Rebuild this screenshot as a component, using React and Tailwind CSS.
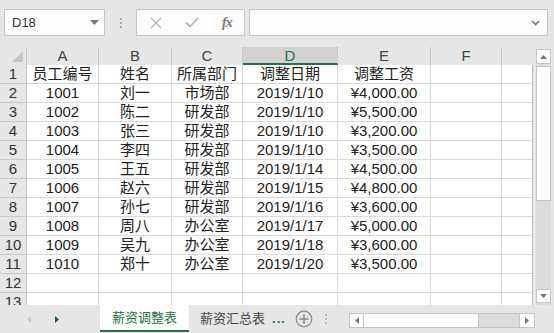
import React from 'react';

const cols = [
  { key: 'A', w: 72 },
  { key: 'B', w: 73 },
  { key: 'C', w: 71 },
  { key: 'D', w: 95 },
  { key: 'E', w: 93 },
  { key: 'F', w: 71 },
  { key: '', w: 30 },
];

const colW = ['w-[72px]', 'w-[73px]', 'w-[71px]', 'w-[95px]', 'w-[93px]', 'w-[71px]', 'w-[30px]'];

const rows = [
  ['员工编号', '姓名', '所属部门', '调整日期', '调整工资'],
  ['1001', '刘一', '市场部', '2019/1/10', '¥4,000.00'],
  ['1002', '陈二', '研发部', '2019/1/10', '¥5,500.00'],
  ['1003', '张三', '研发部', '2019/1/10', '¥3,200.00'],
  ['1004', '李四', '研发部', '2019/1/10', '¥3,500.00'],
  ['1005', '王五', '研发部', '2019/1/14', '¥4,500.00'],
  ['1006', '赵六', '研发部', '2019/1/15', '¥4,800.00'],
  ['1007', '孙七', '研发部', '2019/1/16', '¥3,600.00'],
  ['1008', '周八', '办公室', '2019/1/17', '¥5,000.00'],
  ['1009', '吴九', '办公室', '2019/1/18', '¥3,600.00'],
  ['1010', '郑十', '办公室', '2019/1/20', '¥3,500.00'],
  [],
  [],
];

const font = { fontFamily: '"Liberation Sans", "Noto Sans CJK SC", sans-serif' };

export default function App() {
  return (
    <div className="w-[554px] h-[333px] overflow-hidden bg-[#e6e6e6] flex flex-col text-[#222]" style={font}>
      {/* Formula bar */}
      <div className="h-[47px] flex items-start pt-[9px] pl-[4px] shrink-0">
        <div className="w-[101px] h-[27px] bg-[#fdfdfd] border border-[#c6c6c6] flex items-center justify-between pl-[7px] pr-[5px] text-[13px] text-[#333]">
          <span>D18</span>
          <svg width="9" height="5" viewBox="0 0 9 5"><path d="M0 0h9L4.5 5z" fill="#777" /></svg>
        </div>
        <div className="w-[31px] h-[27px] flex flex-col items-center justify-center gap-[2px]">
          <span className="w-[2px] h-[2px] bg-[#aaa]" />
          <span className="w-[2px] h-[2px] bg-[#aaa]" />
          <span className="w-[2px] h-[2px] bg-[#aaa]" />
        </div>
        <div className="w-[109px] h-[27px] bg-[#fdfdfd] border border-[#c6c6c6] flex items-center">
          <svg className="ml-[13px]" width="12" height="12" viewBox="0 0 12 12"><path d="M1 1l10 10M11 1L1 11" stroke="#b8b8b8" strokeWidth="1.4" /></svg>
          <svg className="ml-[23px]" width="14" height="11" viewBox="0 0 14 11"><path d="M1 5.5l4 4L13 1" stroke="#b8b8b8" strokeWidth="1.8" fill="none" /></svg>
          <span className="ml-[23px] text-[14px] italic font-bold text-[#777] tracking-[-1px]" style={{ fontFamily: '"Liberation Serif", serif' }}>fx</span>
        </div>
        <div className="ml-[4px] w-[299px] h-[27px] bg-[#fdfdfd] border border-[#c6c6c6] flex items-center justify-end pr-[7px]">
          <svg width="9" height="6" viewBox="0 0 9 6"><path d="M1 1l3.5 3.5L8 1" stroke="#777" strokeWidth="1.6" fill="none" /></svg>
        </div>
      </div>

      {/* Sheet area */}
      <div className="h-[258px] flex shrink-0">
        <div className="w-[533px] h-[258px] overflow-hidden">
          {/* column headers */}
          <div className="flex h-[18px] text-[15px] leading-[17px] text-[#444]">
            <div className="w-[27px] h-[18px] border-r border-[#c8c8c8] relative">
              <svg className="absolute right-[3px] bottom-[3px]" width="11" height="11" viewBox="0 0 11 11"><path d="M11 0v11H0z" fill="#c4c4c4" /></svg>
            </div>
            {cols.map((c, i) => (
              <div
                key={i}
                className={`${colW[i]} h-[18px] border-r text-center ${c.key === 'D' ? 'bg-[#d2d2d2] text-[#217346] border-b-2 border-b-[#217346] border-r-[#c8c8c8]' : 'border-[#c8c8c8]'} ${i === 6 ? 'border-r-0' : ''}`}
              >
                {c.key}
              </div>
            ))}
          </div>
          {/* rows */}
          <div className="bg-white border-r border-[#bdbdbd] w-[533px]">
            {rows.map((r, ri) => (
              <div key={ri} className="flex h-[19px] text-[15px] leading-[18px]">
                <div className="w-[27px] bg-[#e6e6e6] border-r border-b border-[#c8c8c8] text-center text-[#333]">{ri + 1}</div>
                {cols.map((c, ci) => (
                  <div
                    key={ci}
                    className={`${colW[ci]} border-r border-b border-[#d9d9d9] text-center whitespace-nowrap overflow-hidden ${ci === 6 ? 'border-r-0' : ''}`}
                  >
                    {r[ci] || ''}
                  </div>
                ))}
              </div>
            ))}
          </div>
        </div>
        {/* vertical scrollbar */}
        <div className="ml-[3px] mt-[2px] w-[15px] h-[256px] flex flex-col bg-[#dcdcdc]">
          <div className="h-[15px] bg-white border border-[#c6c6c6] flex items-center justify-center">
            <svg width="7" height="4" viewBox="0 0 7 4"><path d="M0 4h7L3.5 0z" fill="#777" /></svg>
          </div>
          <div className="mt-[2px] h-[135px] bg-white border border-[#c6c6c6]" />
          <div className="flex-1" />
          <div className="h-[14px] mb-[2px] bg-white border border-[#c6c6c6] flex items-center justify-center">
            <svg width="7" height="4" viewBox="0 0 7 4"><path d="M0 0h7L3.5 4z" fill="#777" /></svg>
          </div>
        </div>
      </div>

      {/* Tabs bar */}
      <div className="flex-1 flex items-start">
        <div className="w-[100px] h-[28px] flex items-center shrink-0">
          <svg className="ml-[27px]" width="4" height="7" viewBox="0 0 4 7"><path d="M4 0v7L0 3.5z" fill="#c8c8c8" /></svg>
          <svg className="ml-[24px]" width="4" height="7" viewBox="0 0 4 7"><path d="M0 0v7l4-3.5z" fill="#1d5a38" /></svg>
        </div>
        <div className="w-[89px] h-[27px] shrink-0 bg-white border-b-2 border-[#217346] flex items-center justify-center text-[13px] text-[#217346]">
          薪资调整表
        </div>
        <div className="h-[27px] flex items-center pl-[11px] text-[13px] text-[#444] whitespace-nowrap">
          薪资汇总表
          <span className="ml-[7px] text-[#217346] font-bold text-[13px] tracking-[1px]">...</span>
        </div>
        <div className="h-[27px] flex items-center ml-[9px]">
          <svg width="18" height="18" viewBox="0 0 18 18">
            <circle cx="9" cy="9" r="7.8" stroke="#8a8a8a" strokeWidth="1.2" fill="none" />
            <path d="M9 4.5v9M4.5 9h9" stroke="#8a8a8a" strokeWidth="1.6" />
          </svg>
        </div>
        <div className="h-[27px] ml-[12px] flex flex-col items-center justify-center gap-[2px]">
          <span className="w-[2px] h-[2px] bg-[#bbb]" />
          <span className="w-[2px] h-[2px] bg-[#bbb]" />
          <span className="w-[2px] h-[2px] bg-[#bbb]" />
        </div>
        <div className="ml-auto mr-[19px] mt-[8px] w-[186px] h-[15px] flex border border-[#c6c6c6] bg-[#dcdcdc]">
          <div className="w-[14px] bg-white border-r border-[#c6c6c6] flex items-center justify-center">
            <svg width="4" height="7" viewBox="0 0 4 7"><path d="M4 0v7L0 3.5z" fill="#777" /></svg>
          </div>
          <div className="w-[115px] bg-white border-r border-[#c6c6c6]" />
          <div className="flex-1" />
          <div className="w-[15px] bg-white border-l border-[#c6c6c6] flex items-center justify-center">
            <svg width="4" height="7" viewBox="0 0 4 7"><path d="M0 0v7l4-3.5z" fill="#777" /></svg>
          </div>
        </div>
      </div>
    </div>
  );
}
